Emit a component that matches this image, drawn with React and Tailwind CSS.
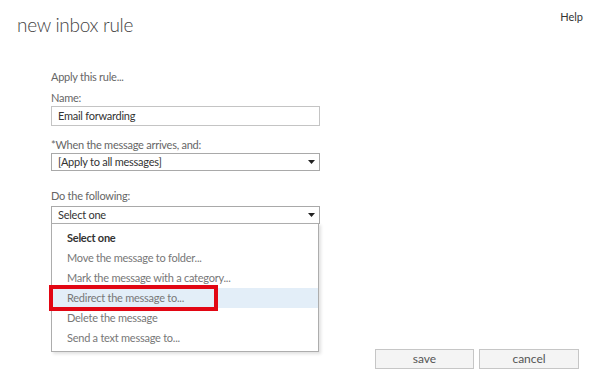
import React from "react";

const font = { fontFamily: 'Lato, "Open Sans", "Liberation Sans", sans-serif' };

function Caret() {
  return (
    <svg width="7" height="4" viewBox="0 0 7 4" className="shrink-0">
      <path d="M0 0 H7 L3.5 4 Z" fill="#222" />
    </svg>
  );
}

export default function App() {
  const items = [
    "Move the message to folder...",
    "Mark the message with a category...",
    "Redirect the message to...",
    "Delete the message",
    "Send a text message to...",
  ];
  return (
    <div className="w-[600px] h-[387px] bg-white relative overflow-hidden" style={font}>
      <div className="flex justify-between pl-[17px] pr-[17px]">
        <div className="pt-[11px] text-[19px] leading-[28px] font-light text-[#444] tracking-[-0.3px]">
          new inbox rule
        </div>
        <div className="pt-[9px] text-[11px] leading-[16px] text-[#333]">Help</div>
      </div>

      <div className="pl-[51px] pt-[30px] w-[320px] text-[11px] text-[#666] tracking-[-0.25px]">
        <div className="leading-[16px]">Apply this rule...</div>
        <div className="leading-[16px] mt-[5px]">Name:</div>
        <div className="h-[20px] border border-[#c4c4c4] flex items-center px-[6px] text-[#333]">
          Email forwarding
        </div>
        <div className="leading-[16px] mt-[11px]">*When the message arrives, and:</div>
        <div className="h-[18px] border border-[#a9a9a9] flex items-center justify-between pl-[6px] pr-[4px] text-[#333]">
          <span>[Apply to all messages]</span>
          <Caret />
        </div>
        <div className="leading-[16px] mt-[17px]">Do the following:</div>
        <div className="relative mt-[2px]">
          <div className="h-[18px] border border-[#a9a9a9] flex items-center justify-between pl-[6px] pr-[4px] text-[#333]">
            <span>Select one</span>
            <Caret />
          </div>
          <div className="absolute left-0 top-[17px] w-[268px] h-[129px] bg-white border border-[#adadad] shadow-[2px_2px_3px_rgba(0,0,0,0.12)] pt-[4px]">
            <div className="h-[20px] leading-[20px] pl-[15px] font-bold text-[#333]">Select one</div>
            {items.map((t, i) => (
              <div
                key={t}
                className={
                  "h-[20px] leading-[20px] pl-[15px] text-[#777] " +
                  (i === 2 ? "bg-[#e3eef8]" : "")
                }
              >
                {t}
              </div>
            ))}
          </div>
          <div className="absolute left-[-2px] top-[79px] w-[169px] h-[26px] border-[4px] border-[#e20613]" />
        </div>
      </div>

      <div className="absolute left-[375px] top-[349px] flex gap-[5px] text-[12px] text-[#555]">
        <button className="w-[99px] h-[20px] bg-[#f4f4f4] border border-[#c6c6c6] flex items-center justify-center">
          save
        </button>
        <button className="w-[100px] h-[20px] bg-[#f4f4f4] border border-[#c6c6c6] flex items-center justify-center">
          cancel
        </button>
      </div>
    </div>
  );
}
